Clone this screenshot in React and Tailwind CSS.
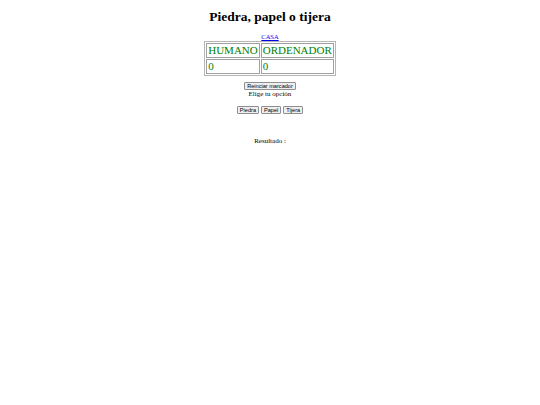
export default function App() {
  const serif = { fontFamily: '"Liberation Serif", "Times New Roman", serif' };
  const sans = { fontFamily: '"Liberation Sans", Arial, sans-serif' };
  const btn = 'h-[8px] px-[2px] text-[5.6px] leading-[6px] bg-[#efefef] border border-[#8f8f8f] rounded-[1px] text-black';
  return (
    <div className="w-[540px] h-[405px] bg-white flex flex-col items-center text-black antialiased" style={serif}>
      <h1 className="mt-[9px] text-[13.5px] leading-[15px] font-bold">Piedra, papel o tijera</h1>

      <a href="#" className="mt-[9px] text-[6.5px] leading-[7px] text-[#0000ee] underline">CASA</a>

      <table className="mt-[1px] border border-[#b5b5b5] border-separate border-spacing-[1px] text-[#008000] text-[11px] leading-[13px]">
        <tbody>
          <tr>
            <td className="border border-[#a0a0a0] px-[1px] py-0 h-[15px]">HUMANO</td>
            <td className="border border-[#a0a0a0] px-[1px] py-0">ORDENADOR</td>
          </tr>
          <tr>
            <td className="border border-[#a0a0a0] px-[1px] py-0 h-[15px]">0</td>
            <td className="border border-[#a0a0a0] px-[1px] py-0">0</td>
          </tr>
        </tbody>
      </table>

      <div className="mt-[6px] flex flex-col items-center">
        <button className={btn} style={sans}>Reinciar marcador</button>
        <p className="text-[7px] leading-[8px]">Elige tu opción</p>
      </div>

      <div className="mt-[8px] flex gap-[2px]" style={sans}>
        {['Piedra', 'Papel', 'Tijera'].map((o) => (
          <button key={o} className={btn}>{o}</button>
        ))}
      </div>

      <p className="mt-[23px] text-[7px] leading-[8px]">Resultado :</p>
    </div>
  );
}
